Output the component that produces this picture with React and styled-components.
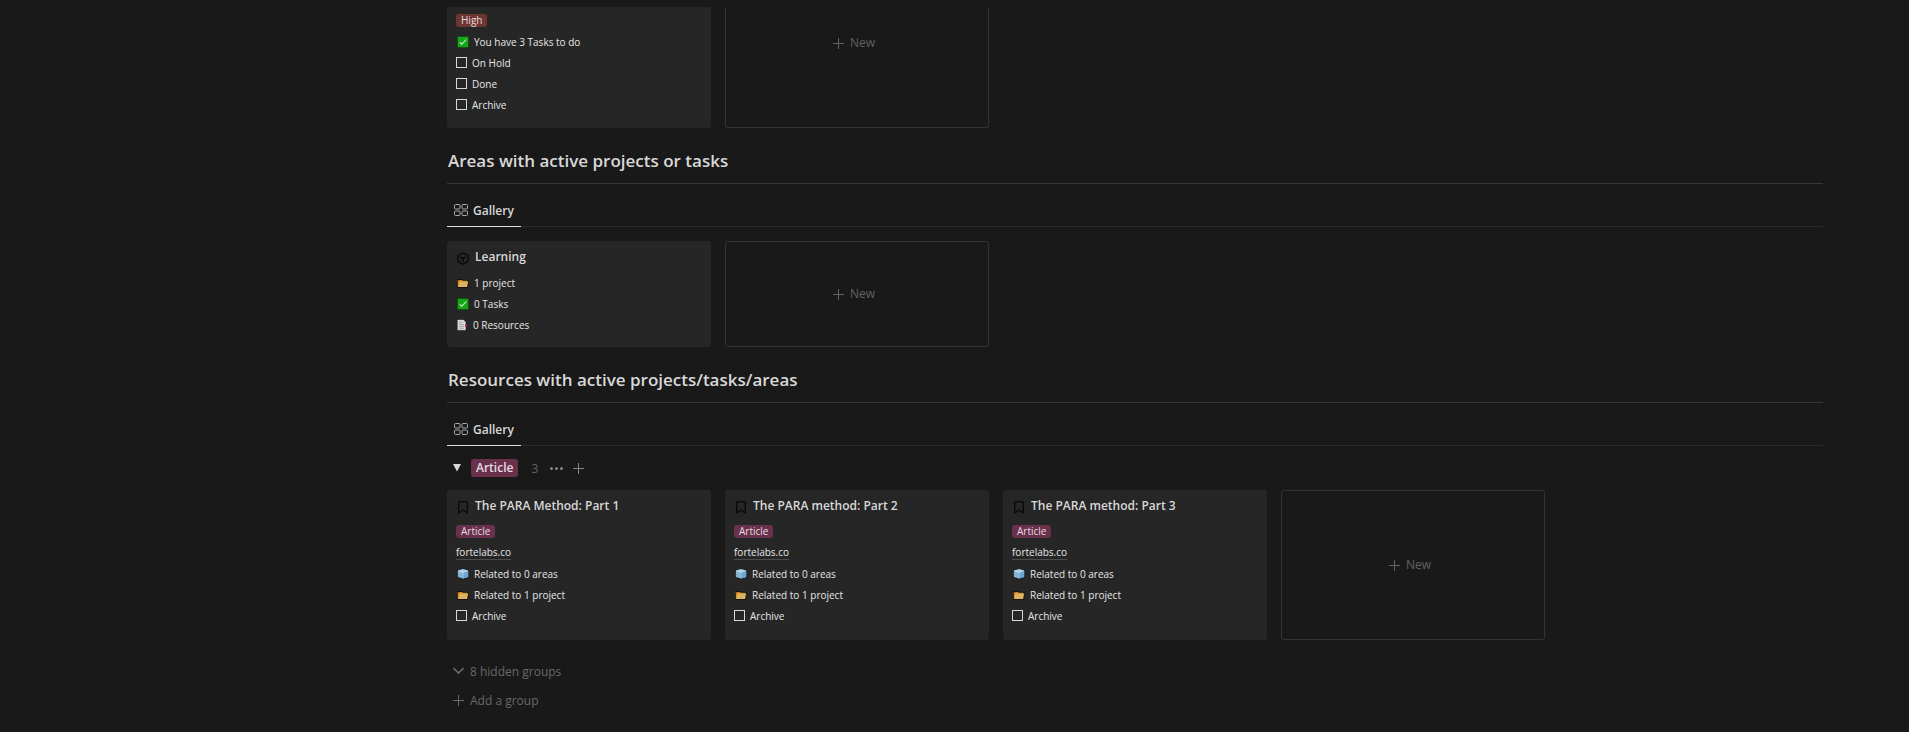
import React from "react";
import styled, { createGlobalStyle } from "styled-components";

const GlobalStyle = createGlobalStyle`
  *, *::before, *::after { box-sizing: border-box; }
  body {
    margin: 0;
    background: #191919;
    color: #d8d8d8;
    font-family: "Segoe UI", "Open Sans", "Noto Sans", sans-serif;
    font-size: 12px;
  }
  button {
    border: 0;
    padding: 0;
    background: none;
    color: inherit;
    font: inherit;
    cursor: pointer;
  }
`;

const Page = styled.div`
  display: grid;
  grid-template-columns: 315fr 1376fr;
  column-gap: 47px;
  padding: 7px 86px 16px 85px;
`;

const Content = styled.main`
  grid-column: 2;
  min-width: 0;
`;

const SectionHeading = styled.h2`
  margin: 20px 0 0;
  padding: 0 1px 10px;
  border-bottom: 1px solid #373737;
  font-size: 17px;
  font-weight: 600;
  line-height: 25px;
`;

const TabBar = styled.div`
  display: flex;
  padding-top: 12px;
  margin-bottom: ${(p) => (p.$tight ? 0 : 14)}px;
  box-shadow: inset 0 -1px #2a2a2a;
`;

const Tab = styled.button`
  display: flex;
  align-items: center;
  gap: 5px;
  height: 31px;
  padding: 0 7px 2px;
  border-bottom: 1px solid #e0e0e0;
  font-weight: 600;
`;

const Gallery = styled.div`
  display: grid;
  grid-template-columns: repeat(auto-fill, minmax(260px, 1fr));
  grid-auto-rows: minmax(${(p) => p.$rowHeight}px, auto);
  gap: 14px;
`;

const Card = styled.article`
  padding: ${(p) => (p.$continued ? 3 : 7)}px 9px 11px;
  border-radius: ${(p) => (p.$continued ? "0 0 3px 3px" : "3px")};
  background: #262626;
`;

const CardTitle = styled.h3`
  display: flex;
  align-items: center;
  gap: 6px;
  margin: 0 0 6px;
  padding-left: 1px;
  font-size: 12px;
  font-weight: 600;
  line-height: 18px;

  svg { margin-top: 2px; }
`;

const Property = styled.div`
  display: flex;
  align-items: center;
  gap: 5px;
  height: 21px;
  padding-left: ${(p) => (p.$icon ? 1 : 0)}px;
  color: #e6e6e6;
  font-size: 10px;
  line-height: 14px;
`;

const CheckProperty = styled(Property).attrs({ as: "label" })`
  cursor: pointer;
`;

const CheckBox = styled.input.attrs({ type: "checkbox" })`
  appearance: none;
  width: 11px;
  height: 11px;
  margin: 0;
  border: 1px solid #d8d8d8;

  &:checked { background: #2383e2; }
`;

const tones = { red: "#6e3630", pink: "#69314c" };

const Tag = styled.span`
  padding: 0 5px;
  border-radius: 3px;
  background: ${(p) => tones[p.$tone]};
  color: #e6dde0;
  font-size: 10px;
  line-height: 13px;
`;

const GroupTag = styled(Tag)`
  font-size: 12px;
  font-weight: 600;
  line-height: 18px;
`;

const SiteLink = styled.a`
  border-bottom: 1px solid #4c4c4c;
  color: inherit;
  line-height: 13px;
  text-decoration: none;
`;

const NewCard = styled.button`
  display: flex;
  align-items: ${(p) => (p.$continued ? "flex-start" : "center")};
  justify-content: center;
  padding: ${(p) => (p.$continued ? "28px 6px 0 0" : "0 6px 0 0")};
  border: 1px solid #333;
  border-top-width: ${(p) => (p.$continued ? 0 : 1)}px;
  border-radius: ${(p) => (p.$continued ? "0 0 3px 3px" : "3px")};
  color: #626262;
  line-height: 16px;
`;

const IconLabel = styled.span`
  display: flex;
  align-items: center;
  gap: 6px;
`;

const GroupHeader = styled.div`
  display: flex;
  align-items: center;
  gap: 10px;
  height: 44px;
  padding-left: 6px;
`;

const IconButton = styled.button`
  display: flex;
  color: #858585;
`;

const Count = styled.span`
  padding: 0 2px 0 3px;
  color: #626262;
`;

const GroupActions = styled.div`
  display: flex;
  flex-direction: column;
  align-items: flex-start;
  margin-top: 17px;
  padding-left: 6px;
`;

const GroupAction = styled.button`
  height: 29px;
  color: #686868;
`;

const GalleryIcon = () => (
  <svg width="14" height="12" viewBox="0 0 14 12" fill="none" stroke="#a8a8a8" aria-hidden="true">
    <rect x="0.5" y="0.5" width="5.5" height="4.5" rx="1" />
    <rect x="8" y="0.5" width="5.5" height="4.5" rx="1" />
    <rect x="0.5" y="7" width="5.5" height="4.5" rx="1" />
    <rect x="8" y="7" width="5.5" height="4.5" rx="1" />
  </svg>
);

const PlusIcon = () => (
  <svg width="11" height="11" viewBox="0 0 11 11" stroke="currentColor" aria-hidden="true">
    <path d="M5.5 0v11M0 5.5h11" />
  </svg>
);

const ChevronIcon = () => (
  <svg width="11" height="11" viewBox="0 0 11 11" fill="none" stroke="currentColor" strokeWidth="1.6" aria-hidden="true">
    <path d="M.5 2l5 5 5-5" />
  </svg>
);

const TriangleIcon = () => (
  <svg width="8" height="11" viewBox="0 0 8 11" fill="#d8d8d8" aria-hidden="true">
    <path d="M0 1h8L4 8.5z" />
  </svg>
);

const DotsIcon = () => (
  <svg width="13" height="3" viewBox="0 0 13 3" fill="currentColor" aria-hidden="true">
    <circle cx="1.5" cy="1.5" r="1.5" />
    <circle cx="6.5" cy="1.5" r="1.5" />
    <circle cx="11.5" cy="1.5" r="1.5" />
  </svg>
);

const CubeOutlineIcon = () => (
  <svg width="12" height="13" viewBox="0 0 12 13" fill="none" stroke="#0a0a0a" strokeWidth="1.4" strokeLinejoin="round" aria-hidden="true">
    <path d="M6 .8l5.2 2.9v5.6L6 12.2.8 9.3V3.7zM2.8 4.8L6 6.6l3.2-1.8M6 6.6V10" />
  </svg>
);

const BookmarkIcon = () => (
  <svg width="12" height="13" viewBox="0 0 12 13" fill="none" stroke="#0a0a0a" strokeWidth="1.4" strokeLinejoin="round" aria-hidden="true">
    <path d="M1.7 12V1.8q0-1 1-1h6.6q1 0 1 1V12L6 9z" />
  </svg>
);

const CheckEmoji = () => (
  <svg width="12" height="12" viewBox="0 0 12 12" aria-hidden="true">
    <rect width="12" height="12" rx="0.5" fill="#111b11" />
    <rect x="0.6" y="0.6" width="10.8" height="10.8" fill="#16a516" />
    <path d="M2.8 6.3l2 2 4.4-4.8" fill="none" stroke="#dff3df" strokeWidth="1.1" />
  </svg>
);

const FolderEmoji = () => (
  <svg width="12" height="12" viewBox="0 0 12 12" aria-hidden="true">
    <path d="M0 2h5l1 .8h5.6V5L11 11H0z" fill="#15120c" />
    <path d="M.8 3h4l1 .8h4.5V5L9 10H.8z" fill="#c98e1e" />
    <path d="M.8 3h2v1h-2z" fill="#d8531f" />
    <path d="M2.3 4.5h8.9l-1.1 5.6H1.2z" fill="#dcb360" />
  </svg>
);

const PageEmoji = () => (
  <svg width="11" height="12" viewBox="0 0 11 12" aria-hidden="true">
    <path d="M0 0h7l2.5 2.5V12H0z" fill="#171717" />
    <path d="M.5 .8h6l2.3 2.3v8.2H.5z" fill="#d4d4d4" />
    <path d="M2 3.5h3M2 5.5h5M2 7.5h5M2 9.3h5" stroke="#999" strokeWidth=".7" />
    <path d="M8 5l3 1.5L8 8z" fill="#c2187f" />
  </svg>
);

const IceEmoji = () => (
  <svg width="12" height="12" viewBox="0 0 12 12" aria-hidden="true">
    <path d="M6 .6l5 1.2q1 .3 1 1v5.8q0 .7-1 1.1L6 11.4 1 9.7q-1-.4-1-1.1V2.8q0-.7 1-1z" fill="#141b20" />
    <path d="M6 1.2l4.4 1q.8.3.8.9v5.3q0 .6-.8.9L6 10.6 1.6 9.3q-.8-.3-.8-.9V3.1q0-.6.8-.9z" fill="#84b4d4" />
    <path d="M6 1.2l4.4 1q.8.3.8.9L6 5.2.8 3.1q0-.6.8-.9z" fill="#b0d2e4" />
    <path d="M6 5.2l5.2-2.1v5.3q0 .6-.8.9L6 10.6z" fill="#6fa6cf" />
    <path d="M6 5.2v5.4" stroke="#a9d3ea" strokeWidth=".6" />
  </svg>
);

const CheckField = ({ label }) => (
  <CheckProperty>
    <CheckBox />
    {label}
  </CheckProperty>
);

const GalleryTab = ({ tight }) => (
  <TabBar $tight={tight}>
    <Tab>
      <GalleryIcon />
      Gallery
    </Tab>
  </TabBar>
);

const AddCard = ({ continued }) => (
  <NewCard $continued={continued}>
    <IconLabel>
      <PlusIcon />
      New
    </IconLabel>
  </NewCard>
);

const articles = ["The PARA Method: Part 1", "The PARA method: Part 2", "The PARA method: Part 3"];

export default function App() {
  return (
    <Page>
      <GlobalStyle />
      <Content>
        <Gallery $rowHeight={121}>
          <Card $continued>
            <Property>
              <Tag $tone="red">High</Tag>
            </Property>
            <Property $icon>
              <CheckEmoji />
              You have 3 Tasks to do
            </Property>
            <CheckField label="On Hold" />
            <CheckField label="Done" />
            <CheckField label="Archive" />
          </Card>
          <AddCard continued />
        </Gallery>

        <SectionHeading>Areas with active projects or tasks</SectionHeading>
        <GalleryTab />
        <Gallery $rowHeight={106}>
          <Card>
            <CardTitle>
              <CubeOutlineIcon />
              Learning
            </CardTitle>
            <Property $icon>
              <FolderEmoji />
              1 project
            </Property>
            <Property $icon>
              <CheckEmoji />
              0 Tasks
            </Property>
            <Property $icon>
              <PageEmoji />
              0 Resources
            </Property>
          </Card>
          <AddCard />
        </Gallery>

        <SectionHeading>Resources with active projects/tasks/areas</SectionHeading>
        <GalleryTab tight />
        <GroupHeader>
          <IconButton aria-label="Collapse group">
            <TriangleIcon />
          </IconButton>
          <GroupTag $tone="pink">Article</GroupTag>
          <Count>3</Count>
          <IconButton aria-label="Group options">
            <DotsIcon />
          </IconButton>
          <IconButton aria-label="Add to group">
            <PlusIcon />
          </IconButton>
        </GroupHeader>
        <Gallery $rowHeight={150}>
          {articles.map((title) => (
            <Card key={title}>
              <CardTitle>
                <BookmarkIcon />
                {title}
              </CardTitle>
              <Property>
                <Tag $tone="pink">Article</Tag>
              </Property>
              <Property>
                <SiteLink href="#fortelabs">fortelabs.co</SiteLink>
              </Property>
              <Property $icon>
                <IceEmoji />
                Related to 0 areas
              </Property>
              <Property $icon>
                <FolderEmoji />
                Related to 1 project
              </Property>
              <CheckField label="Archive" />
            </Card>
          ))}
          <AddCard />
        </Gallery>

        <GroupActions>
          <GroupAction>
            <IconLabel>
              <ChevronIcon />
              8 hidden groups
            </IconLabel>
          </GroupAction>
          <GroupAction>
            <IconLabel>
              <PlusIcon />
              Add a group
            </IconLabel>
          </GroupAction>
        </GroupActions>
      </Content>
    </Page>
  );
}
